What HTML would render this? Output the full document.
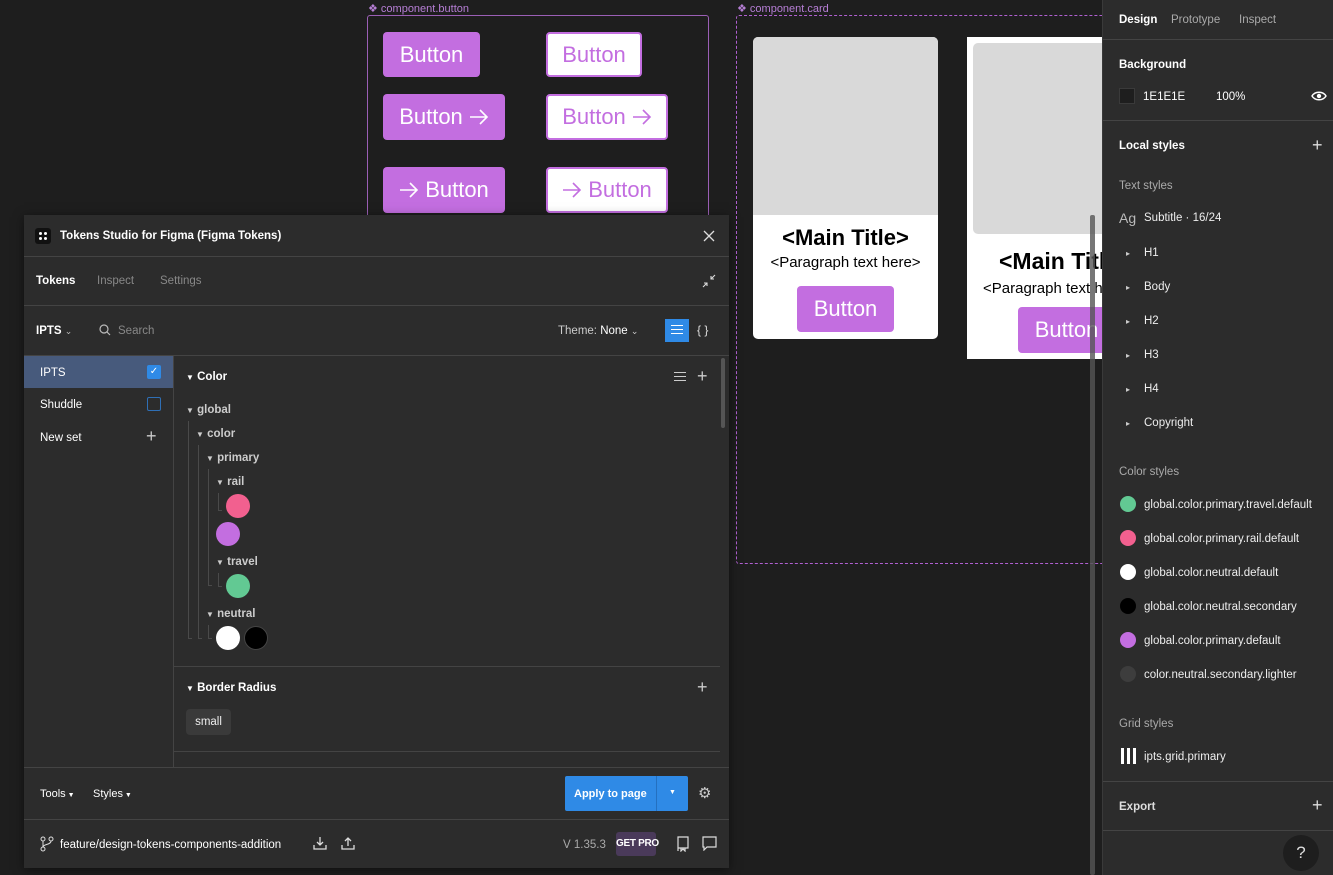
<!DOCTYPE html>
<html><head><meta charset="utf-8"><style>
*{box-sizing:border-box;margin:0;padding:0}
body{width:1333px;height:875px;background:#1e1e1e;font-family:"Liberation Sans",sans-serif;position:relative;overflow:hidden;color:#fff}
.a{position:absolute}
.t{font-size:12px;white-space:nowrap;padding-top:1px}
.btnf{position:absolute;background:#c36ee0;color:#fff;border-radius:4px;font-size:22px;display:flex;align-items:center;justify-content:center;gap:6px;white-space:nowrap}
.btno{position:absolute;background:#fff;color:#c36ee0;border:2px solid #c36ee0;border-radius:4px;font-size:22px;display:flex;align-items:center;justify-content:center;gap:6px;white-space:nowrap}
.btnf svg path{stroke:#fff}.btno svg path{stroke:#c36ee0}
.hl{position:absolute;height:1px;background:#444}
.dot{position:absolute;width:24px;height:24px;border-radius:50%}
.sd{position:absolute;width:16px;height:16px;border-radius:50%}
.rp{position:absolute;left:1144px;font-size:11.5px;color:#eee;white-space:nowrap;padding-top:1px}
.tri{position:absolute;font-size:8px;color:#ccc;padding-top:1px}
.ln{position:absolute;border-left:1px solid #4a4a4a}
</style></head><body>

<!-- component.button frame -->
<div class="a t" style="left:368px;top:1px;font-size:11px;color:#b77fd6">❖ component.button</div>
<div class="a" style="left:367px;top:15px;width:342px;height:210px;border:1px solid #9b5fb5;border-radius:3px"></div>
<div class="btnf" style="left:383px;top:32px;width:97px;height:45px">Button</div>
<div class="btno" style="left:546px;top:32px;width:96px;height:45px">Button</div>
<div class="btnf" style="left:383px;top:94px;width:122px;height:46px">Button <svg width="20" height="16" viewBox="0 0 20 16"><path d="M1 8H18M11 1L18 8L11 15" fill="none" stroke-width="1.6"/></svg></div>
<div class="btno" style="left:546px;top:94px;width:122px;height:46px">Button <svg width="20" height="16" viewBox="0 0 20 16"><path d="M1 8H18M11 1L18 8L11 15" fill="none" stroke-width="1.6"/></svg></div>
<div class="btnf" style="left:383px;top:167px;width:122px;height:46px"><svg width="20" height="16" viewBox="0 0 20 16"><path d="M1 8H18M11 1L18 8L11 15" fill="none" stroke-width="1.6"/></svg> Button</div>
<div class="btno" style="left:546px;top:167px;width:122px;height:46px"><svg width="20" height="16" viewBox="0 0 20 16"><path d="M1 8H18M11 1L18 8L11 15" fill="none" stroke-width="1.6"/></svg> Button</div>

<!-- component.card frame -->
<div class="a t" style="left:737px;top:1px;font-size:11px;color:#b77fd6">❖ component.card</div>
<div class="a" style="left:736px;top:15px;width:380px;height:549px;border:1px dashed #b060d0;border-radius:3px"></div>
<div class="a" style="left:753px;top:37px;width:185px;height:302px;background:#fff;border-radius:5px;overflow:hidden">
 <div style="height:178px;background:#d9d9d9"></div>
 <div style="text-align:center;font-weight:bold;font-size:22px;color:#000;margin-top:10px">&lt;Main Title&gt;</div>
 <div style="text-align:center;font-size:15px;color:#000;margin-top:3px">&lt;Paragraph text here&gt;</div>
 <div class="btnf" style="left:44px;top:249px;width:97px;height:46px">Button</div>
</div>
<div class="a" style="left:967px;top:37px;width:135px;height:322px;background:#fff;overflow:hidden">
 <div style="position:absolute;left:6px;top:6px;width:140px;height:191px;background:#d9d9d9;border-radius:5px"></div>
 <div style="position:absolute;left:32px;top:211px;font-weight:bold;font-size:23px;color:#000;white-space:nowrap">&lt;Main Title&gt;</div>
 <div style="position:absolute;left:16px;top:243px;font-size:15px;color:#000;white-space:nowrap">&lt;Paragraph text here&gt;</div>
 <div class="btnf" style="left:51px;top:270px;width:97px;height:46px">Button</div>
</div>
<div class="a" style="left:1090px;top:215px;width:5px;height:660px;background:#555;border-radius:2px;opacity:.8"></div>

<!-- right panel -->
<div class="a" style="left:1102px;top:0;width:231px;height:875px;background:#2c2c2c;border-left:1px solid #3a3a3a"></div>
<div class="a t" style="left:1119px;top:13px;font-size:11.5px;font-weight:bold">Design</div>
<div class="a t" style="left:1171px;top:13px;font-size:11.5px;color:#aaa">Prototype</div>
<div class="a t" style="left:1239px;top:13px;font-size:11.5px;color:#aaa">Inspect</div>
<div class="hl" style="left:1103px;top:39px;width:230px"></div>
<div class="a t" style="left:1119px;top:58px;font-size:11.5px;font-weight:bold">Background</div>
<div class="a" style="left:1119px;top:88px;width:16px;height:16px;background:#1e1e1e;border:1px solid #3a3a3a"></div>
<div class="a t" style="left:1143px;top:90px;font-size:11.5px">1E1E1E</div>
<div class="a t" style="left:1216px;top:90px;font-size:11.5px">100%</div>
<svg class="a" style="left:1311px;top:90px" width="16" height="12" viewBox="0 0 16 12"><path d="M1 6C4 1 12 1 15 6C12 11 4 11 1 6Z" fill="none" stroke="#fff" stroke-width="1.4"/><circle cx="8" cy="6" r="2.2" fill="#fff"/></svg>
<div class="hl" style="left:1103px;top:120px;width:230px"></div>
<div class="a t" style="left:1119px;top:139px;font-size:11.5px;font-weight:bold">Local styles</div>
<div class="a" style="left:1312px;top:138px;font-size:18px;line-height:14px;color:#ddd">+</div>
<div class="a t" style="left:1119px;top:179px;font-size:11.5px;color:#aaa">Text styles</div>
<div class="a t" style="left:1119px;top:209px;font-size:14px;color:#bbb">Ag</div>
<div class="rp" style="top:211px">Subtitle · 16/24</div>
<div class="tri" style="left:1126px;top:248px">▸</div><div class="rp" style="top:246px">H1</div>
<div class="tri" style="left:1126px;top:282px">▸</div><div class="rp" style="top:280px">Body</div>
<div class="tri" style="left:1126px;top:316px">▸</div><div class="rp" style="top:314px">H2</div>
<div class="tri" style="left:1126px;top:350px">▸</div><div class="rp" style="top:348px">H3</div>
<div class="tri" style="left:1126px;top:384px">▸</div><div class="rp" style="top:382px">H4</div>
<div class="tri" style="left:1126px;top:418px">▸</div><div class="rp" style="top:416px">Copyright</div>
<div class="a t" style="left:1119px;top:465px;font-size:11.5px;color:#aaa">Color styles</div>
<div class="sd" style="left:1120px;top:496px;background:#62c993"></div><div class="rp" style="top:498px">global.color.primary.travel.default</div>
<div class="sd" style="left:1120px;top:530px;background:#f2608f"></div><div class="rp" style="top:532px">global.color.primary.rail.default</div>
<div class="sd" style="left:1120px;top:564px;background:#fff"></div><div class="rp" style="top:566px">global.color.neutral.default</div>
<div class="sd" style="left:1120px;top:598px;background:#000"></div><div class="rp" style="top:600px">global.color.neutral.secondary</div>
<div class="sd" style="left:1120px;top:632px;background:#c36ee0"></div><div class="rp" style="top:634px">global.color.primary.default</div>
<div class="sd" style="left:1120px;top:666px;background:#3d3d3d"></div><div class="rp" style="top:668px">color.neutral.secondary.lighter</div>
<div class="a t" style="left:1119px;top:717px;font-size:11.5px;color:#aaa">Grid styles</div>
<div class="a" style="left:1121px;top:748px;width:3px;height:16px;background:#fff;box-shadow:6px 0 #fff,12px 0 #fff"></div>
<div class="rp" style="top:750px">ipts.grid.primary</div>
<div class="hl" style="left:1103px;top:781px;width:230px"></div>
<div class="a t" style="left:1119px;top:800px;font-size:11.5px;font-weight:bold;color:#ddd">Export</div>
<div class="a" style="left:1312px;top:798px;font-size:18px;line-height:14px;color:#ddd">+</div>
<div class="hl" style="left:1103px;top:830px;width:230px"></div>
<div class="a" style="left:1283px;top:835px;width:36px;height:36px;border-radius:50%;background:#1e1e1e;color:#ddd;font-size:17px;display:flex;align-items:center;justify-content:center">?</div>

<!-- plugin window -->
<div class="a" style="left:24px;top:215px;width:705px;height:653px;background:#2c2c2c;box-shadow:0 2px 10px rgba(0,0,0,.5)"></div>
<div class="a" style="left:35px;top:228px;width:16px;height:16px;background:#111;border-radius:3px"></div>
<div class="a" style="left:39px;top:232px;width:3px;height:3px;background:#fff;border-radius:50%;box-shadow:5px 0 #fff,0 5px #fff,5px 5px #fff"></div>
<div class="a t" style="left:60px;top:229px;font-weight:bold;font-size:11.5px">Tokens Studio for Figma (Figma Tokens)</div>
<svg class="a" style="left:703px;top:230px" width="12" height="12"><path d="M1 1L11 11M11 1L1 11" stroke="#ddd" stroke-width="1.3"/></svg>
<div class="hl" style="left:24px;top:256px;width:705px"></div>
<div class="a t" style="left:36px;top:274px;font-size:11.5px;font-weight:bold">Tokens</div>
<div class="a t" style="left:97px;top:274px;font-size:11.5px;color:#888">Inspect</div>
<div class="a t" style="left:160px;top:274px;font-size:11.5px;color:#888">Settings</div>
<svg class="a" style="left:701px;top:273px" width="16" height="16"><path d="M10 6L14 2M10 3V6H13M6 10L2 14M6 13V10H3" stroke="#ddd" stroke-width="1.1" fill="none"/></svg>
<div class="hl" style="left:24px;top:305px;width:705px"></div>
<div class="a t" style="left:36px;top:324px;font-size:11.5px;font-weight:bold">IPTS <span style="font-weight:normal;color:#bbb;font-size:9px">⌄</span></div>
<svg class="a" style="left:99px;top:324px" width="12" height="12"><circle cx="5" cy="5" r="4" stroke="#bbb" fill="none" stroke-width="1.2"/><path d="M8 8L11 11" stroke="#bbb" stroke-width="1.2"/></svg>
<div class="a t" style="left:118px;top:324px;font-size:11.5px;color:#888">Search</div>
<div class="a t" style="left:558px;top:324px;font-size:11.5px;color:#ccc">Theme: <span style="color:#fff">None</span> <span style="font-size:9px">⌄</span></div>
<div class="a" style="left:665px;top:319px;width:24px;height:23px;background:#2f8ae6"></div>
<div class="a" style="left:671px;top:325px;width:12px;height:1px;background:#fff;box-shadow:0 4px #fff,0 8px #fff"></div>
<div class="a t" style="left:697px;top:322px;font-size:12px;color:#ddd">{ }</div>
<div class="hl" style="left:24px;top:355px;width:705px"></div>

<!-- sidebar -->
<div class="a" style="left:173px;top:356px;width:1px;height:411px;background:#444"></div>
<div class="a" style="left:24px;top:356px;width:149px;height:32px;background:#475a7c"></div>
<div class="a t" style="left:40px;top:366px;font-size:11.5px">IPTS</div>
<div class="a" style="left:147px;top:365px;width:14px;height:14px;background:#2f8ae6;border-radius:2px;color:#fff;font-size:10px;text-align:center;line-height:14px">✓</div>
<div class="a t" style="left:40px;top:398px;font-size:11.5px">Shuddle</div>
<div class="a" style="left:147px;top:397px;width:14px;height:14px;border:1px solid #2f6fb5;border-radius:2px"></div>
<div class="a t" style="left:40px;top:431px;font-size:11.5px">New set</div>
<div class="a" style="left:146px;top:426px;font-size:18px;color:#ccc">+</div>

<!-- tree -->
<div class="a" style="left:721px;top:358px;width:4px;height:70px;background:#555;border-radius:2px"></div>
<div class="a t" style="left:186px;top:370px;font-size:11.5px;font-weight:bold"><span style="font-size:8px">▼</span> Color</div>
<div class="a" style="left:674px;top:372px;width:12px;height:1px;background:#ccc;box-shadow:0 4px #ccc,0 8px #ccc"></div>
<div class="a" style="left:697px;top:366px;font-size:18px;color:#ccc">+</div>
<div class="a t" style="left:186px;top:403px;font-size:11.5px;font-weight:bold;color:#ccc"><span style="font-size:8px">▼</span> global</div>
<div class="a t" style="left:196px;top:427px;font-size:11.5px;font-weight:bold;color:#ccc"><span style="font-size:8px">▼</span> color</div>
<div class="a t" style="left:206px;top:451px;font-size:11.5px;font-weight:bold;color:#ccc"><span style="font-size:8px">▼</span> primary</div>
<div class="a t" style="left:216px;top:475px;font-size:11.5px;font-weight:bold;color:#ccc"><span style="font-size:8px">▼</span> rail</div>
<div class="a t" style="left:216px;top:555px;font-size:11.5px;font-weight:bold;color:#ccc"><span style="font-size:8px">▼</span> travel</div>
<div class="a t" style="left:206px;top:607px;font-size:11.5px;font-weight:bold;color:#ccc"><span style="font-size:8px">▼</span> neutral</div>
<div class="ln" style="left:188px;top:421px;height:218px;border-bottom:1px solid #4a4a4a;width:4px"></div>
<div class="ln" style="left:198px;top:445px;height:194px;border-bottom:1px solid #4a4a4a;width:4px"></div>
<div class="ln" style="left:208px;top:469px;height:117px;border-bottom:1px solid #4a4a4a;width:4px"></div>
<div class="ln" style="left:208px;top:625px;height:14px;border-bottom:1px solid #4a4a4a;width:4px"></div>
<div class="ln" style="left:218px;top:493px;height:18px;border-bottom:1px solid #4a4a4a;width:4px"></div>
<div class="ln" style="left:218px;top:573px;height:14px;border-bottom:1px solid #4a4a4a;width:4px"></div>
<div class="dot" style="left:226px;top:494px;background:#f2608f"></div>
<div class="dot" style="left:216px;top:522px;background:#c36ee0"></div>
<div class="dot" style="left:226px;top:574px;background:#62c993"></div>
<div class="dot" style="left:216px;top:626px;background:#fff"></div>
<div class="dot" style="left:244px;top:626px;background:#000;border:1px solid #444"></div>
<div class="hl" style="left:174px;top:666px;width:546px"></div>
<div class="a t" style="left:186px;top:681px;font-size:11.5px;font-weight:bold"><span style="font-size:8px">▼</span> Border Radius</div>
<div class="a" style="left:697px;top:677px;font-size:18px;color:#ccc">+</div>
<div class="a" style="left:186px;top:709px;width:45px;height:26px;background:#3a3a3a;border-radius:4px;font-size:11.5px;color:#eee;text-align:center;line-height:26px">small</div>
<div class="hl" style="left:174px;top:751px;width:546px"></div>

<!-- footers -->
<div class="hl" style="left:24px;top:767px;width:705px"></div>
<div class="a t" style="left:40px;top:787px;font-size:11px">Tools<span style="font-size:7px"> ▼</span></div>
<div class="a t" style="left:93px;top:787px;font-size:11px">Styles<span style="font-size:7px"> ▼</span></div>
<div class="a" style="left:565px;top:776px;width:123px;height:35px;background:#2f8ae6;border-radius:2px"></div>
<div class="a" style="left:656px;top:776px;width:1px;height:35px;background:#2470c0"></div>
<div class="a t" style="left:574px;top:787px;font-size:11px;font-weight:bold">Apply to page</div>
<div class="a" style="left:669px;top:789px;font-size:7px">▼</div>
<div class="a" style="left:698px;top:784px;font-size:15px;color:#ccc">⚙</div>
<div class="hl" style="left:24px;top:819px;width:705px"></div>
<svg class="a" style="left:40px;top:836px" width="14" height="16"><circle cx="3" cy="3" r="2" stroke="#ddd" fill="none"/><circle cx="3" cy="13" r="2" stroke="#ddd" fill="none"/><circle cx="11" cy="3" r="2" stroke="#ddd" fill="none"/><path d="M3 5V11M11 5C11 9 3 8 3 11" stroke="#ddd" fill="none"/></svg>
<div class="a t" style="left:60px;top:838px;font-size:11.5px">feature/design-tokens-components-addition</div>
<svg class="a" style="left:313px;top:836px" width="14" height="14"><path d="M7 1V9M4 6L7 9L10 6M1 9V13H13V9" stroke="#ddd" fill="none" stroke-width="1.3"/></svg>
<svg class="a" style="left:341px;top:836px" width="14" height="14"><path d="M7 10V2M4 5L7 2L10 5M1 9V13H13V9" stroke="#ddd" fill="none" stroke-width="1.3"/></svg>
<div class="a t" style="left:563px;top:838px;font-size:11.5px;color:#aaa">V 1.35.3</div>
<div class="a" style="left:616px;top:832px;width:40px;height:24px;background:#4a3a5a;border-radius:3px;font-size:10px;font-weight:bold;text-align:center;line-height:24px;white-space:nowrap;letter-spacing:-0.3px">GET PRO</div>
<svg class="a" style="left:677px;top:836px" width="12" height="16"><path d="M1 1H11V12H1ZM1 12V15M4 12V15L6 13L8 15V12" stroke="#ddd" fill="none" stroke-width="1.2"/></svg>
<svg class="a" style="left:702px;top:836px" width="15" height="15"><path d="M1 1H14V11H5L2 14V11H1Z" stroke="#ddd" fill="none" stroke-width="1.2"/></svg>
</body></html>
